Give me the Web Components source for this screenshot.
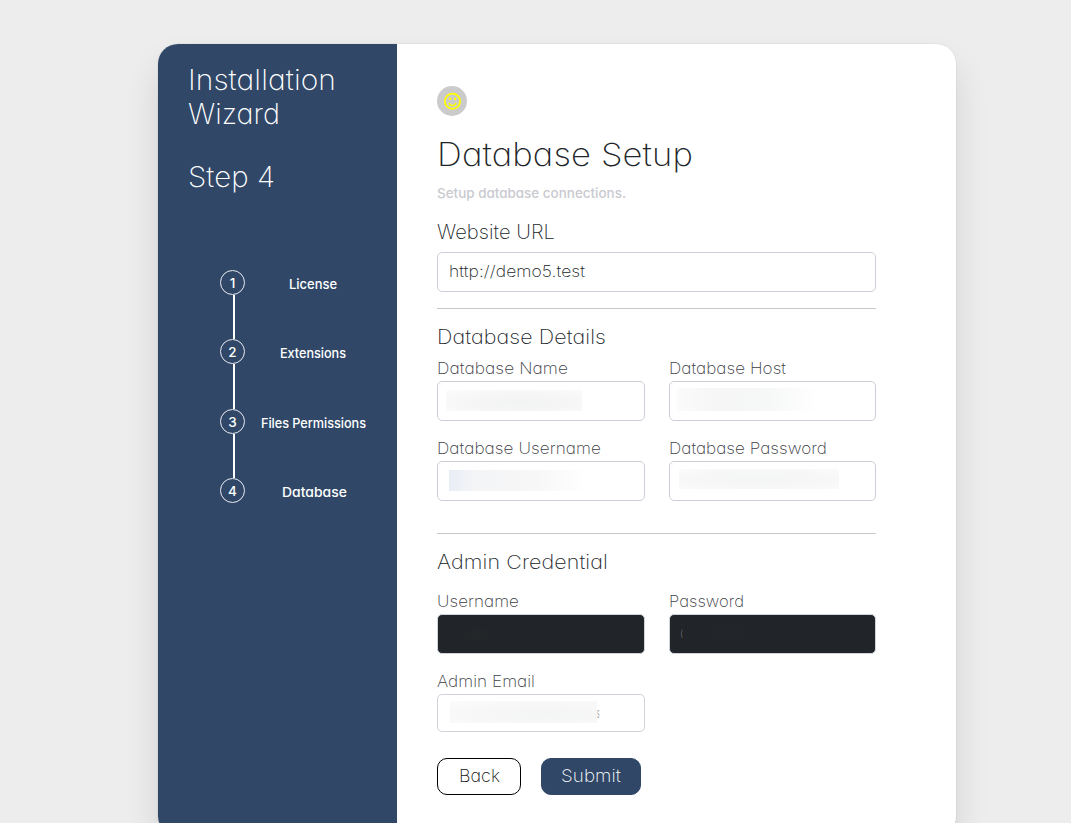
<!DOCTYPE html>
<html lang="en">
<head>
<meta charset="utf-8">
<title>Installation Wizard</title>
<style>
html,body{margin:0;height:823px;overflow:hidden}
body{background:#ededed;font-family:Inter,"Liberation Sans",sans-serif;font-weight:200;color:#212529;font-feature-settings:"cv11"}
</style>
</head>
<body>
<install-wizard></install-wizard>
<script>
const define=(name,html,after)=>customElements.define(name,class extends HTMLElement{
  constructor(){super();this.attachShadow({mode:'open'}).innerHTML=html}
  connectedCallback(){if(after)after.call(this,this.shadowRoot)}
});

/* Single line of text widened to occupy the width given in "w":
   most of the difference goes to the glyphs, the rest to tracking. */
define('fit-text',`<style>:host{display:inline-block;white-space:nowrap}span{display:inline-block;transform-origin:0 50%}</style><span><slot></slot></span>`,function(root){
  const w=+this.getAttribute('w'),s=root.querySelector('span');
  const fit=()=>{s.style.letterSpacing='0';s.style.transform='none';
    const n=this.textContent.length,nat=s.getBoundingClientRect().width;
    const k=1+(w/nat-1)*.9;
    s.style.letterSpacing=((w/k-nat)/n).toFixed(3)+'px';
    s.style.transform='scaleX('+k.toFixed(4)+')';this.style.width=w+'px'};
  fit();document.fonts.ready.then(fit);
});

define('wizard-step',`<style>
:host{display:grid;grid-template-columns:25px 1fr;height:69.5px;color:#fff}
.mark{display:flex;flex-direction:column;align-items:center}
.num{box-sizing:border-box;width:25px;height:25px;flex:none;border:1px solid #e8ebf0;border-radius:50%;font:500 13.5px/24px Inter,sans-serif;text-align:center}
.line{width:2px;flex:1;background:#fff;margin-left:3px}
:host([last]) .line{display:none}
.label{font-size:13.3px;font-weight:500;line-height:29px;text-align:center}
</style><div class="mark"><div class="num"></div><div class="line"></div></div><div class="label"><slot></slot></div>`,function(r){r.querySelector('.num').textContent=this.getAttribute('n')});

define('wizard-sidebar',`<style>
:host{display:block;box-sizing:border-box;width:239px;background:#304767;color:#fff;padding:19px 0 0 29.5px;font-weight:250}
.t{font-size:28px;line-height:34px;height:34px}
.s{margin-top:29px}
.steps{margin:75.6px 15.5px 0 32.5px}
</style>
<div class="t"><fit-text w="148">Installation</fit-text></div>
<div class="t"><fit-text w="92">Wizard</fit-text></div>
<div class="t s"><fit-text w="87">Step 4</fit-text></div>
<div class="steps">
<wizard-step n="1"><fit-text w="48">License</fit-text></wizard-step>
<wizard-step n="2"><fit-text w="66">Extensions</fit-text></wizard-step>
<wizard-step n="3"><fit-text w="105">Files Permissions</fit-text></wizard-step>
<wizard-step n="4" last><fit-text w="65">Database</fit-text></wizard-step>
</div>`);

define('face-badge',`<style>:host{display:block;width:30px;height:30px;border-radius:50%;background:#cbcbcb}svg{display:block}</style>
<svg width="30" height="30" viewBox="0 0 30 30" fill="none" stroke="#ff0"><circle cx="15.5" cy="15.3" r="7.6" stroke-width="1.8"/><path d="M12.2 17.4a3.4 2.9 0 0 0 6.6 0" stroke-width="1.6" stroke-linecap="round"/><path d="M12 11.8h2.2v2.2H12zM17 11.8h2.2v2.2H17z" fill="#ff0" stroke="none"/></svg>`);

define('text-box',`<style>
:host{display:flex;box-sizing:border-box;height:40px;border:1px solid #cdced8;border-radius:5px;background:#fff;font-size:15.5px;line-height:37px}
:host([dark]){background:#212529;border-color:#ced4da}
:host([short]){height:38px;border-color:#ced4da}
</style><slot></slot>`);

/* Redacted value: a soft smudge over the box. */
define('soft-mask',`<style>:host{display:block;flex:none}</style>`);

define('form-field',`<style>
:host{display:block;min-width:0}
.l{height:20px;line-height:20px;font-size:16px;margin-bottom:3px;color:#3c4046}
</style><div class="l"><slot name="label"></slot></div><slot></slot>`);

define('form-button',`<style>
:host{display:flex;box-sizing:border-box;align-items:center;justify-content:center;width:84px;height:37px;border:1px solid #000;border-radius:10px;font-size:17px;line-height:35px;color:#111}
:host([primary]){width:100px;background:#304767;border-color:#304767;color:#fff;font-weight:250}
</style><slot></slot>`);

define('database-form',`<style>
:host{display:block;width:439px;padding:42px 0 0 40px}
h1,h2,p,hr{margin:0;font-weight:inherit}
h1{font-size:32px;line-height:39px;height:39px;margin-top:19px}
p{font-size:13.5px;line-height:19px;height:20px;margin-top:10px;color:#c9cad0;font-weight:500}
h2{font-size:19.5px;line-height:24px;height:24px;margin-top:16px}
hr{border:0;height:1px;background:#c7c8ca;margin-top:16px}
.url{margin-top:8px}
.grid{display:grid;grid-template-columns:208px 207px;column-gap:24px;row-gap:17px}
.db{margin-top:9px}.far{margin-top:32px}.ad{margin-top:17px}
.m1{margin:8px 0 0 8px;width:136px;height:21px;background:radial-gradient(ellipse at 55% 60%,#f2f3f3,#f6f6f6 50%,#fcfcfc)}
.m2{margin:6px 0 0 7px;width:140px;height:23px;background:linear-gradient(90deg,#fbfbfb,#f6f6f6 25%,#f6f7f7 65%,#fff)}
.m3{margin:8px 0 0 11px;width:140px;height:21px;background:linear-gradient(90deg,#e8edf5,#f4f5f7 18%,#f7f7f7 60%,#fff)}
.m4{margin:7px 0 0 9px;width:160px;height:20px;background:radial-gradient(ellipse at 50% 50%,#f4f5f5,#f7f7f7 60%,#fbfbfb)}
.m5{margin:6px 0 0 12px;width:147px;height:22px;background:radial-gradient(ellipse at 65% 60%,#f4f5f5,#f7f7f7 50%,#fbfbfb)}
.m6{margin:10px 0 0 20px;width:40px;height:20px;background:radial-gradient(closest-side,#232729,#212529)}
.m7{width:90px;height:36px;background:radial-gradient(closest-side,#222629,#212529)}
.end,.start{transform-origin:0 50%;transform:scaleX(.35);font-size:13.5px;color:#333}
.start{margin-left:10px;font-size:9.5px;color:#8b8f93;transform:none}
.actions{display:flex;gap:20px;margin-top:26px}
.val{margin-left:10.5px}
</style>
<face-badge></face-badge>
<h1><fit-text w="256">Database Setup</fit-text></h1>
<p><fit-text w="189">Setup database connections.</fit-text></p>
<h2><fit-text w="118">Website URL</fit-text></h2>
<text-box class="url"><fit-text class="val" w="136">http://demo5.test</fit-text></text-box>
<hr>
<h2><fit-text w="169">Database Details</fit-text></h2>
<div class="grid db">
<form-field><fit-text slot="label" w="131">Database Name</fit-text><text-box><soft-mask class="m1"></soft-mask></text-box></form-field>
<form-field><fit-text slot="label" w="117">Database Host</fit-text><text-box><soft-mask class="m2"></soft-mask></text-box></form-field>
<form-field><fit-text slot="label" w="164">Database Username</fit-text><text-box><soft-mask class="m3"></soft-mask></text-box></form-field>
<form-field><fit-text slot="label" w="158">Database Password</fit-text><text-box><soft-mask class="m4"></soft-mask></text-box></form-field>
</div>
<hr class="far">
<h2><fit-text w="171">Admin Credential</fit-text></h2>
<div class="grid ad">
<form-field><fit-text slot="label" w="82">Username</fit-text><text-box dark><soft-mask class="m6"></soft-mask></text-box></form-field>
<form-field><fit-text slot="label" w="75">Password</fit-text><text-box dark><span class="start">(</span><soft-mask class="m7"></soft-mask></text-box></form-field>
<form-field><fit-text slot="label" w="98">Admin Email</fit-text><text-box short><soft-mask class="m5"></soft-mask><span class="end">s</span></text-box></form-field>
</div>
<div class="actions">
<form-button><fit-text w="41">Back</fit-text></form-button>
<form-button primary><fit-text w="60">Submit</fit-text></form-button>
</div>`);

define('install-wizard',`<style>
:host{display:block;padding-top:44px}
.card{display:flex;width:798px;height:792px;margin-left:158px;border-radius:20px;overflow:hidden;background:#fff;box-shadow:0 0 0 1px rgba(0,0,0,.035),0 20px 35px rgba(0,0,0,.11)}
</style><div class="card"><wizard-sidebar></wizard-sidebar><database-form></database-form></div>`);
</script>
</body>
</html>
